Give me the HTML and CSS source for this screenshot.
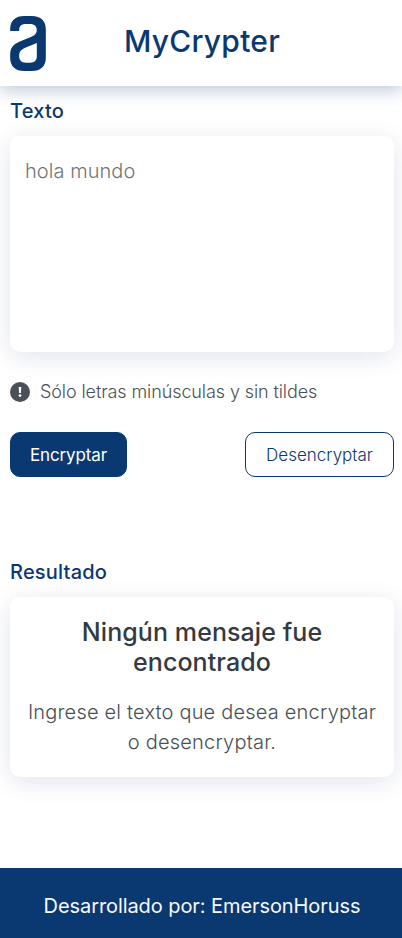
FILE: index.html
```html
<!DOCTYPE html>
<html lang="es">
<head>
<meta charset="utf-8">
<meta name="viewport" content="width=device-width, initial-scale=1">
<title>MyCrypter</title>
<link rel="stylesheet" href="styles.css">
</head>
<body>
<header class="header">
  <svg class="logo" viewBox="30 48 107 165" aria-hidden="true"><path fill-rule="evenodd" d="M30 93V88C30 62 46 48 72 48H95C122 48 137 63 137 88V173C137 198 122 213 95 213H72C45 213 30 198 30 173V165C30 144 38 134 57 125L94 110Q110 104 110 91C110 79 103 72 90 72H76C63 72 57 79 57 91V93ZM110 129L75 143Q57 151 57 164V169C57 181 64 188 77 188H90C103 188 110 181 110 169Z"/></svg>
  <h1 class="title">MyCrypter</h1>
</header>
<main class="main">
  <section class="input">
    <label class="label" for="texto">Texto</label>
    <textarea class="card textarea" id="texto" placeholder="hola mundo"></textarea>
    <p class="note">
      <svg class="note-icon" viewBox="0 0 20 20" aria-hidden="true"><circle cx="10" cy="10" r="10" fill="#495057"/><path d="M8.7 5h2.6l-.4 6H9.1z" fill="#fff"/><circle cx="10" cy="13.6" r="1.35" fill="#fff"/></svg>
      <span class="note-text">Sólo letras minúsculas y sin tildes</span>
    </p>
    <div class="actions">
      <button class="btn btn-primary">Encryptar</button>
      <button class="btn btn-outline">Desencryptar</button>
    </div>
  </section>
  <section class="output">
    <h2 class="label">Resultado</h2>
    <div class="card result">
      <h3 class="result-title">Ningún mensaje fue encontrado</h3>
      <p class="result-text">Ingrese el texto que desea encryptar o desencryptar.</p>
    </div>
  </section>
</main>
<footer class="footer">Desarrollado por: EmersonHoruss</footer>
</body>
</html>
```
FILE: styles.css
```css
* { box-sizing: border-box; margin: 0; padding: 0; }
body {
  font-family: Inter, sans-serif;
  font-weight: 300;
  color: #495057;
  background: #fff;
  min-height: 938px;
  display: flex;
  flex-direction: column;
}
.header {
  height: 86px;
  padding: 0 10px;
  display: grid;
  grid-template-columns: 36px 1fr 34px;
  align-items: center;
  box-shadow: 0 4px 16px rgba(10, 56, 113, .28);
}
.logo { width: 36px; height: 55px; fill: #0a3871; }
.title {
  font-size: 30px;
  line-height: 36px;
  font-weight: 500;
  letter-spacing: .25px;
  color: #0a3871;
  text-align: center;
  padding-bottom: 4px;
}
.main { flex: 1; padding: 10px 8px 0 10px; }
.label {
  display: block;
  font-size: 20px;
  line-height: 30px;
  font-weight: 500;
  letter-spacing: .2px;
  color: #0a3871;
  margin-bottom: 10px;
}
.card {
  display: block;
  width: 100%;
  border: 0;
  border-radius: 10px;
  background: #fff;
  box-shadow: 0 5px 24px rgba(20, 30, 100, .12);
}
.textarea {
  height: 216px;
  padding: 20px 15px;
  font: 300 20px/30px Inter, sans-serif;
  letter-spacing: .05px;
  resize: none;
  outline: 0;
}
.textarea::placeholder { color: #757575; }
.note {
  display: flex;
  align-items: center;
  gap: 10px;
  height: 30px;
  margin-top: 25px;
  font-size: 18px;
  letter-spacing: -.1px;
}
.note-icon { width: 20px; height: 20px; }
.note-text { padding-bottom: 2px; }
.actions { display: flex; justify-content: space-between; margin-top: 25px; }
.btn {
  height: 45px;
  border: 1px solid #0a3871;
  border-radius: 10px;
  font: 300 17px/20px Inter, sans-serif;
}
.btn-primary { width: 117px; background: #0a3871; color: #fff; font-weight: 400; letter-spacing: -.12px; }
.btn-outline { width: 149px; background: #fff; color: #0a3871; }
.output { margin-top: 80px; }
.result { height: 180px; padding: 20px 15px; text-align: center; }
.result-title { font-size: 25px; line-height: 30px; font-weight: 500; letter-spacing: .08px; color: #343a40; }
.result-text { font-size: 20px; line-height: 30px; margin-top: 20px; letter-spacing: .2px; }
.footer {
  height: 70px;
  padding: 6px 0 0 2px;
  display: flex;
  align-items: center;
  justify-content: center;
  background: #0a3871;
  color: #f8f9fa;
  font-size: 20px;
  font-weight: 400;
  letter-spacing: -.08px;
}
```
